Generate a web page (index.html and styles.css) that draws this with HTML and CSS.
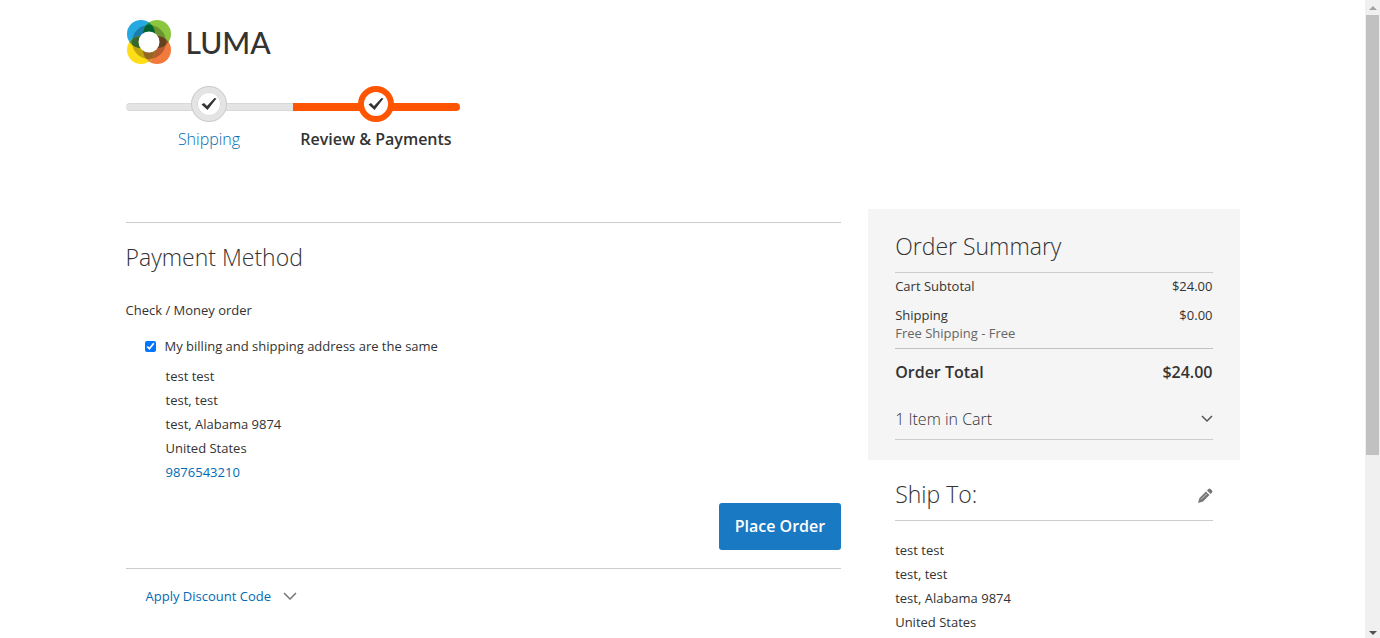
FILE: index.html
```html
<!DOCTYPE html>
<html lang="en">
<head>
  <meta charset="UTF-8" />
  <meta name="viewport" content="width=device-width, initial-scale=1" />
  <title>Checkout</title>
  <link rel="stylesheet" href="styles.css">
</head>
<body>
  <div class="page">
    <header class="header">
      <a class="logo" href="#" aria-label="Luma">
        <svg class="logo-mark" viewBox="0 0 46 46" aria-hidden="true">
          <circle cx="15" cy="15" r="14" fill="#26a8e0" />
          <circle cx="31" cy="15" r="14" fill="#8cc63f" />
          <circle cx="31" cy="31" r="14" fill="#f37a3d" />
          <circle cx="15" cy="31" r="14" fill="#ffde17" />
          <path d="M23 3.500A14 14 0 0 1 23 26.500A14 14 0 0 1 23 3.500z" fill="#00853f" />
          <path d="M42.500 23A14 14 0 0 1 19.500 23A14 14 0 0 1 42.500 23z" fill="#86592a" />
          <path d="M23 42.500A14 14 0 0 1 23 19.500A14 14 0 0 1 23 42.500z" fill="#c98a30" />
          <path d="M3.500 23A14 14 0 0 1 26.500 23A14 14 0 0 1 3.500 23z" fill="#4a8a3a" />
          <circle cx="23" cy="23" r="17" fill="#000" fill-opacity="0.25" />
          <circle cx="23" cy="23" r="10.500" fill="#fff" />
        </svg>
        <span class="logo-text">LUMA</span>
      </a>
    </header>

    <ol class="progress">
      <li class="step">
        <div class="track">
          <span class="bar"></span>
          <span class="marker">
            <svg viewBox="0 0 16 16" aria-hidden="true"><path d="M0.500 8.500 3 7l3 3L13.500 2l2 .5L6.500 14z" /></svg>
          </span>
        </div>
        <a class="step-label" href="#">Shipping</a>
      </li>
      <li class="step active">
        <div class="track">
          <span class="bar"></span>
          <span class="marker">
            <svg viewBox="0 0 16 16" aria-hidden="true"><path d="M0.500 8.500 3 7l3 3L13.500 2l2 .5L6.500 14z" /></svg>
          </span>
        </div>
        <span class="step-label">Review &amp; Payments</span>
      </li>
    </ol>

    <div class="checkout">
      <main class="payment">
        <form class="payment-form">
          <h2 class="title">Payment Method</h2>
          <p class="method">Check / Money order</p>
          <div class="billing">
            <label class="same-address" for="same">
              <input type="checkbox" id="same" checked />
              My billing and shipping address are the same
            </label>
            <address class="address">
              test test<br />
              test, test<br />
              test, Alabama 9874<br />
              United States<br />
              <a href="tel:9876543210">9876543210</a>
            </address>
          </div>
          <div class="actions">
            <button type="submit" class="place-order">Place Order</button>
          </div>
        </form>
        <div class="discount">
          <button type="button" class="discount-toggle">
            Apply Discount Code
            <svg viewBox="0 0 14 8" aria-hidden="true"><path d="M1 1l6 6 6-6" /></svg>
          </button>
        </div>
      </main>

      <aside class="sidebar">
        <section class="summary">
          <h2 class="title">Order Summary</h2>
          <table class="totals">
            <tbody>
              <tr>
                <th scope="row">Cart Subtotal</th>
                <td>$24.00</td>
              </tr>
              <tr class="shipping">
                <th scope="row">Shipping <span class="rate">Free Shipping - Free</span></th>
                <td>$0.00</td>
              </tr>
              <tr class="grand">
                <th scope="row">Order Total</th>
                <td>$24.00</td>
              </tr>
            </tbody>
          </table>
          <button type="button" class="items-toggle">
            1 Item in Cart
            <svg viewBox="0 0 12 8" aria-hidden="true"><path d="M1 1l5 5 5-5" /></svg>
          </button>
        </section>

        <section class="ship-to">
          <div class="ship-head">
            <h2 class="title">Ship To:</h2>
            <button type="button" class="edit" aria-label="Edit">
              <svg viewBox="0 0 16 16" aria-hidden="true">
                <path d="M1 15l1.500-5L9 3.500 12.500 7 6 13.500z" />
                <path d="M10 2.500l1.500-1.500q1-1 2 0l1.500 1.500q1 1 0 2L13.500 6z" />
                <path class="shine" d="M4 11.500l6-6" />
              </svg>
            </button>
          </div>
          <address class="address">
            test test<br />
            test, test<br />
            test, Alabama 9874<br />
            United States
          </address>
        </section>
      </aside>
    </div>
  </div>

  <div class="scrollbar" aria-hidden="true">
    <span class="arrow up"></span>
    <span class="thumb"></span>
    <span class="arrow down"></span>
  </div>
</body>
</html>
```

FILE: styles.css
```css
* {
  box-sizing: border-box;
}

body {
  margin: 0;
  height: 100vh;
  display: flex;
  overflow: hidden;
  background: #fff;
  color: #333;
  font-family: "Open Sans", "Noto Sans", sans-serif;
  font-size: 13px;
  line-height: 24px;
}

a {
  color: #006bb4;
  text-decoration: none;
}

button {
  font-family: inherit;
  border: none;
  background: none;
  padding: 0;
  cursor: pointer;
}

svg {
  display: block;
}

.page {
  flex: 1;
  max-width: 1154px;
  margin: 0 auto;
  padding: 0 20px;
  overflow: hidden;
}

.header {
  padding-top: 19px;
}

.logo {
  display: inline-flex;
  align-items: center;
  gap: 14px;
}

.logo-mark {
  width: 46px;
  height: 46px;
}

.logo-text {
  color: #333;
  font-family: Lato, sans-serif;
  font-size: 30px;
  font-weight: 500;
}

/* Progress bar */
.progress {
  display: flex;
  max-width: 334px;
  margin: 14px 0 0;
  padding: 0;
  list-style: none;
}

.step {
  flex: 1;
  text-align: center;
}

.track {
  display: grid;
  align-items: center;
  justify-items: center;
}

.bar,
.marker {
  grid-area: 1 / 1;
}

.bar {
  width: 100%;
  height: 8px;
  margin-top: 6px;
  background: #e4e4e4;
  border: 1px solid #d8d8d8;
  border-width: 1px 0;
  border-radius: 4px 0 0 4px;
}

.marker {
  display: flex;
  align-items: center;
  justify-content: center;
  width: 36px;
  height: 36px;
  border: 6px solid #e4e4e4;
  border-radius: 50%;
  background: #fff;
  outline: 1px solid #ccc;
  outline-offset: -1px;
  box-shadow: inset 0 0 0 1px #d8d8d8;
}

.marker svg {
  width: 16px;
  height: 16px;
  fill: #333;
}

.active .bar {
  background: #ff5501;
  border-color: #ff5501;
  border-radius: 0 4px 4px 0;
}

.active .marker {
  border-color: #ff5501;
  outline: none;
  box-shadow: none;
}

.step-label {
  display: block;
  margin-top: 5px;
  font-size: 16px;
  font-weight: 300;
}

.active .step-label {
  font-weight: 600;
}

/* Columns */
.checkout {
  display: flex;
  gap: 27px;
  margin-top: 58px;
}

.payment {
  flex: 1;
  padding-top: 13px;
}

.title {
  margin: 0;
  font-size: 23px;
  font-weight: 300;
  line-height: 32px;
}

.payment-form {
  padding: 18px 0;
  border-top: 1px solid #ccc;
  border-bottom: 1px solid #ccc;
}

.method {
  margin: 25px 0 12px;
}

.billing {
  padding-left: 19px;
}

.same-address {
  display: flex;
  align-items: center;
  gap: 9px;
}

.same-address input {
  width: 11px;
  height: 11px;
  margin: 0;
  accent-color: #0075ff;
}

.address {
  font-style: normal;
}

.billing .address {
  margin-top: 6px;
  padding-left: 21px;
}

.actions {
  display: flex;
  justify-content: flex-end;
  margin-top: 19px;
}

.place-order {
  padding: 12px 16px;
  border-radius: 3px;
  background: #1979c3;
  color: #fff;
  font-size: 16px;
  font-weight: 600;
  line-height: 23px;
}

.discount {
  padding: 15px 20px;
}

.discount-toggle {
  display: flex;
  align-items: center;
  gap: 12px;
  color: #006bb4;
  font-size: 13px;
  line-height: 24px;
}

.discount-toggle svg {
  width: 14px;
  height: 8px;
  fill: none;
  stroke: #757575;
  stroke-width: 1.5;
}

/* Order summary */
.sidebar {
  width: 33.3333%;
}

.summary {
  padding: 21px 27px 20px;
  background: #f5f5f5;
}

.summary .title {
  padding-bottom: 10px;
  border-bottom: 1px solid #ccc;
}

.totals {
  width: 100%;
  border-collapse: collapse;
  line-height: 18px;
}

.totals th,
.totals td {
  padding: 4px 0 5px;
  font-weight: 400;
  text-align: left;
  vertical-align: top;
}

.totals td {
  text-align: right;
}

.totals .shipping th,
.totals .shipping td {
  padding: 6px 0;
}

.rate {
  display: block;
  color: #666;
}

.totals .grand th,
.totals .grand td {
  padding: 11px 0;
  border-top: 1px solid #c1c1c1;
  font-size: 16px;
  font-weight: 600;
  line-height: 24px;
}

.items-toggle {
  display: flex;
  align-items: center;
  justify-content: space-between;
  width: 100%;
  margin-top: 12px;
  padding-bottom: 8px;
  border-bottom: 1px solid #ccc;
  color: #333;
  font-size: 16px;
  font-weight: 300;
  line-height: 24px;
}

.items-toggle svg {
  width: 12px;
  height: 8px;
  fill: none;
  stroke: #555;
  stroke-width: 1.5;
}

.ship-to {
  padding: 18px 27px;
}

.ship-head {
  display: flex;
  align-items: center;
  justify-content: space-between;
  margin-bottom: 17px;
  padding-bottom: 10px;
  border-bottom: 1px solid #ccc;
}

.edit {
  padding-top: 4px;
}

.edit svg {
  width: 16px;
  height: 16px;
  fill: #757575;
}

.edit .shine {
  stroke: #ccc;
  stroke-width: 1;
}

/* Scrollbar */
.scrollbar {
  display: flex;
  flex-direction: column;
  align-items: center;
  width: 15px;
  padding: 6px 0 3px;
  background: #f0f0f0;
}

.arrow {
  border: 4px solid transparent;
}

.up {
  border-top: none;
  border-bottom-color: #a3a3a3;
}

.down {
  margin-top: auto;
  border-bottom: none;
  border-top-color: #505050;
}

.thumb {
  width: 13px;
  height: 70%;
  margin-top: 5px;
  background: #c1c1c1;
}
```
